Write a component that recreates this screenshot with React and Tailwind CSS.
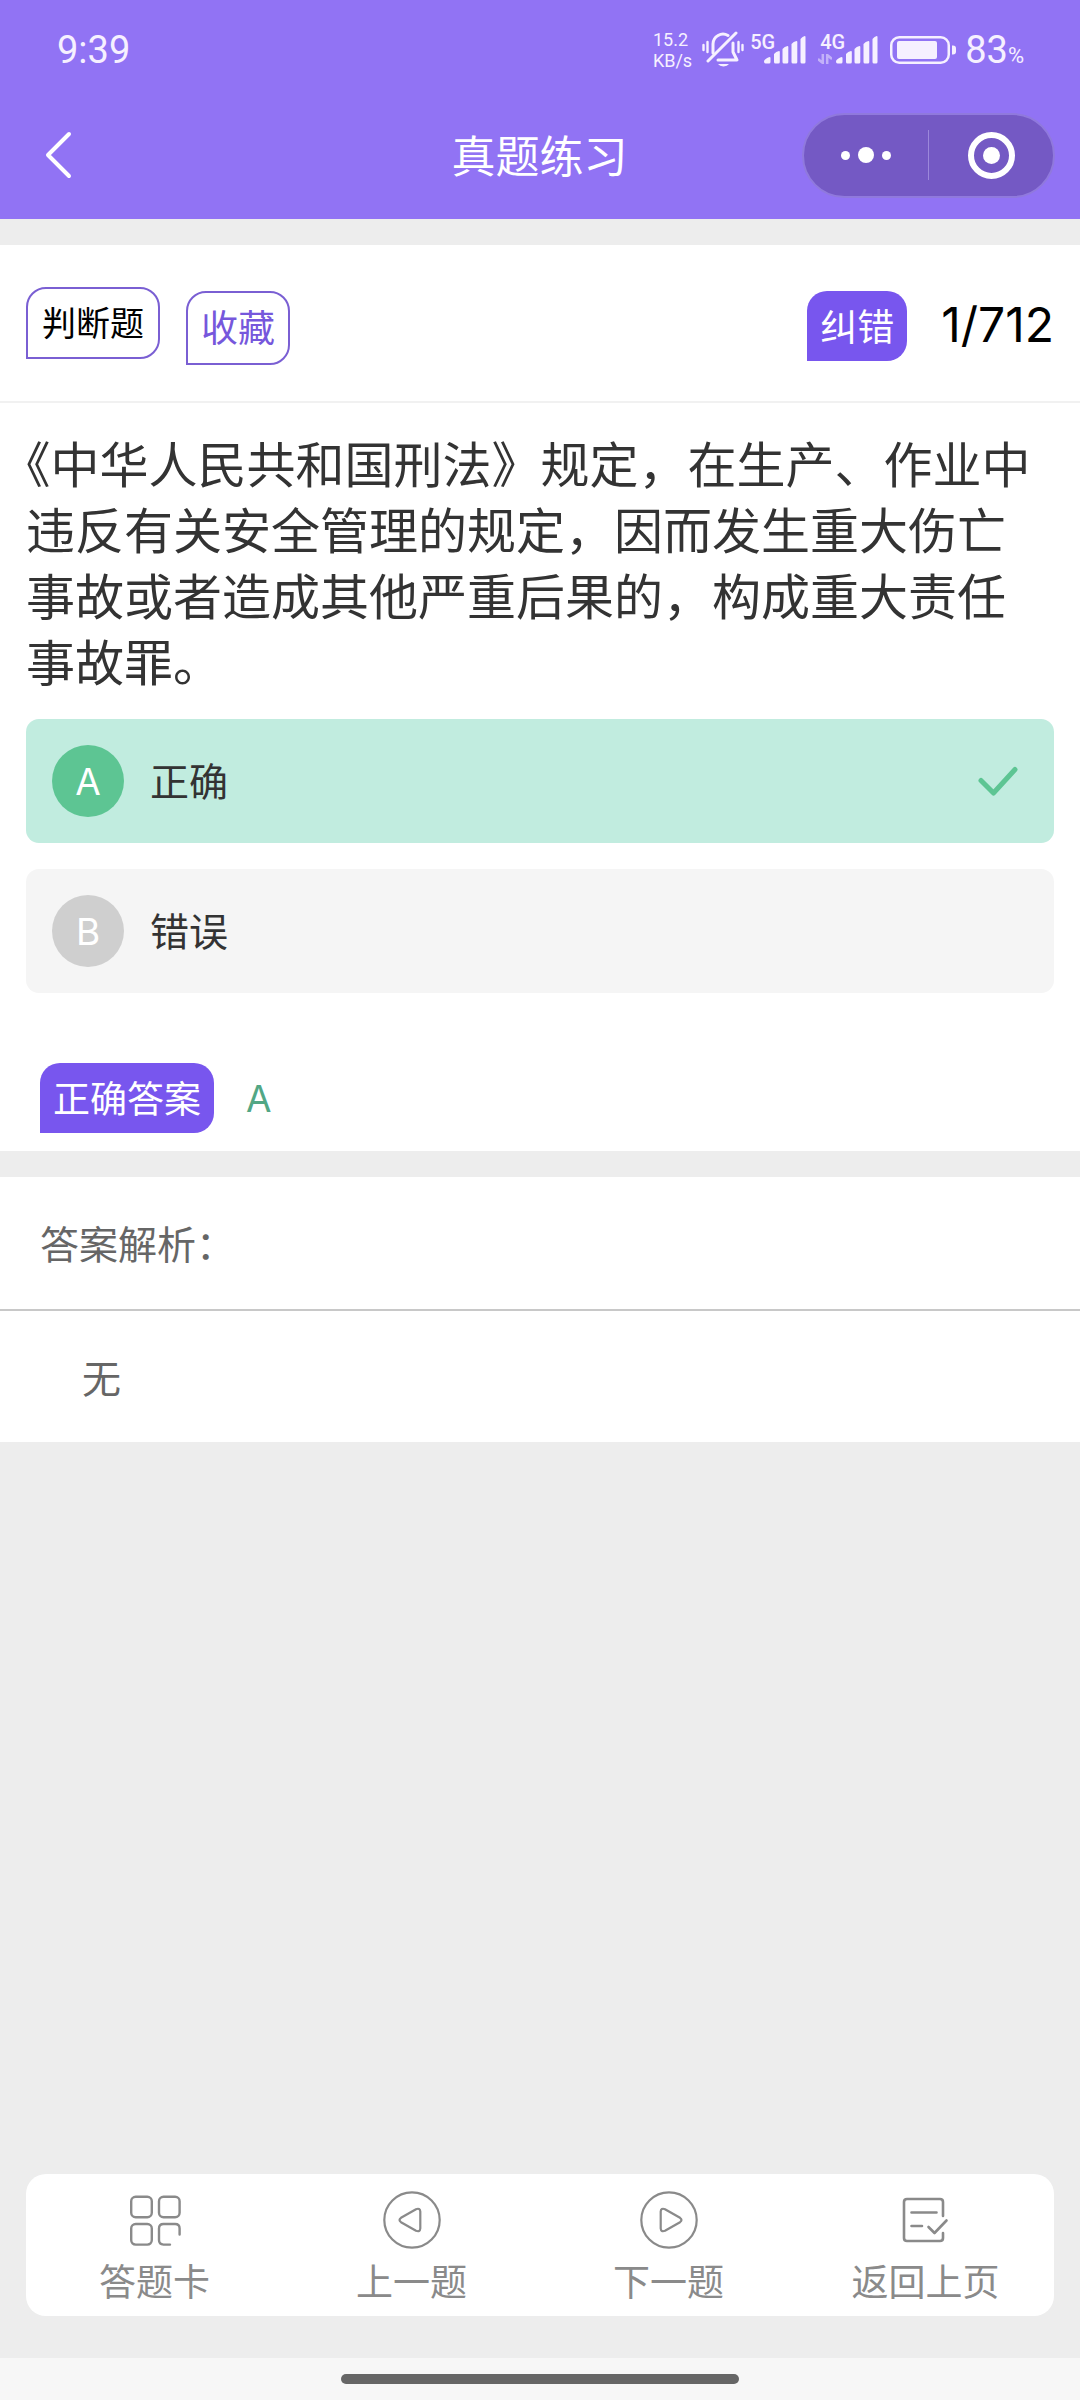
import { useState } from "react";
import clsx from "clsx";

const options = [
  { key: "A", label: "正确" },
  { key: "B", label: "错误" },
];

const correctAnswer = "A";

const BellOffIcon = () => (
  <svg width="42" height="38" viewBox="0 0 42 38" fill="none" stroke="currentColor" strokeLinecap="round" aria-hidden="true">
    <path d="M11 22V13a10 10 0 0 1 15-8.500" strokeWidth="3" />
    <path d="M31 12v9l4 8H16" strokeWidth="3" strokeLinejoin="round" />
    <path d="M6 30 34 2" strokeWidth="3" />
    <path d="M16 33h11a6 4 0 0 1-11 0z" fill="currentColor" stroke="none" />
    <path d="M1.500 14v5M5.500 11v10M36.500 11v10M40.500 14v5" strokeWidth="2.400" />
  </svg>
);

const SignalBars = () => (
  <svg width="42" height="28" viewBox="0 0 42 28" fill="currentColor" aria-hidden="true">
    <path d="M0 25.500Q0 23 5.500 21q1 0 1 1v4q0 1.500-1.500 1.500H1.500Q0 27.500 0 25.500z" />
    <path d="M10 18q2-2.500 5-3 .8 0 .8 1v10q0 1.500-1.500 1.500h-2.800q-1.500 0-1.500-1.500z" />
    <path d="M18.500 13q2-2.500 5-3 .8 0 .8 1v15q0 1.500-1.500 1.500H20q-1.500 0-1.500-1.500z" />
    <path d="M27.500 8q2-2.500 5-3 .8 0 .8 1v20q0 1.500-1.500 1.500H29q-1.500 0-1.500-1.500z" />
    <path d="M36.500 3q2-2.500 4.200-3 .8 0 .8 1v25q0 1.500-1.500 1.500h-2q-1.500 0-1.500-1.500z" />
  </svg>
);

const DataArrows = () => (
  <svg width="14" height="10" viewBox="0 0 14 10" fill="none" stroke="currentColor" strokeWidth="2.500" aria-hidden="true">
    <path d="M4.800 0v9L0 5M9.200 10V1L14 5" />
  </svg>
);

const BatteryIcon = () => (
  <svg width="67" height="28" viewBox="0 0 67 28" fill="none" aria-hidden="true">
    <rect x="1.250" y="1.250" width="57.500" height="25.500" rx="8" stroke="currentColor" strokeWidth="2.500" />
    <rect x="7" y="5" width="40" height="18" rx="2" fill="currentColor" />
    <path d="M62 9.500h1q3 0 3 3v3q0 3-3 3h-1z" fill="currentColor" />
  </svg>
);

const CardIcon = () => (
  <svg width="58" height="58" viewBox="0 0 58 58" fill="none" stroke="currentColor" strokeWidth="2.400" strokeLinecap="round" aria-hidden="true">
    <rect x="5.200" y="5.700" width="20.600" height="20.600" rx="4.500" />
    <rect x="33" y="5.700" width="20.600" height="20.600" rx="4.500" />
    <rect x="5.200" y="33" width="20.600" height="20.600" rx="4.500" />
    <path d="M53.600 43.500v-6q0-4.500-4.500-4.500H37.500Q33 33 33 37.500v11.600q0 4.500 4.500 4.500h6.500" />
  </svg>
);

const PrevIcon = () => (
  <svg width="58" height="58" viewBox="0 0 58 58" fill="none" stroke="currentColor" strokeWidth="2.200" strokeLinejoin="round" aria-hidden="true">
    <circle cx="29" cy="29" r="27.700" />
    <path d="M18 26.800 33 18.200q4-1.500 4.300 2.300v17q-.3 3.800-4.300 2.300L18 31.200q-3-2.200 0-4.400z" />
  </svg>
);

const NextIcon = () => (
  <svg width="58" height="58" viewBox="0 0 58 58" fill="none" stroke="currentColor" strokeWidth="2.200" strokeLinejoin="round" aria-hidden="true">
    <circle cx="29" cy="29" r="27.700" />
    <path d="M40 26.800 25 18.200q-4-1.500-4.300 2.300v17q.3 3.800 4.300 2.300l15-8.600q3-2.200 0-4.400z" />
  </svg>
);

const BackPageIcon = () => (
  <svg width="58" height="58" viewBox="0 0 58 58" fill="none" stroke="currentColor" strokeWidth="2.600" strokeLinecap="round" strokeLinejoin="round" aria-hidden="true">
    <path d="M46 25V11q0-3-3-3H10q-3 0-3 3v36q0 3 3 3h33q3 0 3-3v-5" />
    <path d="M14.500 21.500h25M14.500 35h10.500M31.500 36l6 6L49.500 29.500" />
  </svg>
);

const navItems = [
  { label: "答题卡", Icon: CardIcon },
  { label: "上一题", Icon: PrevIcon },
  { label: "下一题", Icon: NextIcon },
  { label: "返回上页", Icon: BackPageIcon },
];

function StatusBar() {
  return (
    <div className="flex h-[100px] items-center justify-between pr-14 pl-[57px] font-[Roboto,sans-serif] text-[#f6f0ff]">
      <span className="text-[38px]">9:39</span>
      <div className="flex items-center">
        <div className="mr-2.5 flex flex-col text-[18px] leading-[21px]">
          <span>15.2</span>
          <span>KB/s</span>
        </div>
        <BellOffIcon />
        <div className="relative ml-5">
          <SignalBars />
          <span className="absolute -top-1 -left-3.5 text-[20px] leading-5 font-medium">5G</span>
        </div>
        <div className="relative ml-3 flex items-end gap-1">
          <span className="opacity-50">
            <DataArrows />
          </span>
          <SignalBars />
          <span className="absolute -top-1 left-0.5 text-[20px] leading-5 font-medium">4G</span>
        </div>
        <div className="mx-2 ml-3">
          <BatteryIcon />
        </div>
        <div className="flex items-baseline">
          <span className="text-[38px]">83</span>
          <span className="text-[22px]">%</span>
        </div>
      </div>
    </div>
  );
}

function TitleBar() {
  return (
    <div className="grid h-[110px] grid-cols-3 items-center pr-[25px] pl-11 text-white">
      <button type="button" aria-label="返回" className="w-fit">
        <svg width="28" height="48" viewBox="0 0 28 48" fill="none" stroke="currentColor" strokeWidth="4" strokeLinecap="round" strokeLinejoin="round" aria-hidden="true">
          <path d="M25 3 4 24l21 21" />
        </svg>
      </button>
      <h1 className="-ml-5 pt-1 text-center text-[44px] leading-[60px]">真题练习</h1>
      <div className="flex h-[85px] w-[253px] items-center justify-self-end rounded-full border-2 border-[#9079dd] bg-[#7459c4]">
        <button type="button" aria-label="更多" className="flex flex-1 items-center justify-center gap-2">
          <span className="size-[9px] rounded-full bg-white" />
          <span className="size-4 rounded-full bg-white" />
          <span className="size-[9px] rounded-full bg-white" />
        </button>
        <span className="h-[50px] w-px bg-[#9c88db]" />
        <button type="button" aria-label="关闭" className="flex flex-1 items-center justify-center">
          <span className="flex size-[47px] items-center justify-center rounded-full border-6 border-white">
            <span className="size-[17px] rounded-full bg-white" />
          </span>
        </button>
      </div>
    </div>
  );
}

export default function App() {
  const [selected, setSelected] = useState("A");

  return (
    <div
      lang="zh-CN"
      className="flex min-h-screen flex-col bg-[#ededed] font-[Inter,'Noto_Sans_CJK_SC',sans-serif] text-[#333]"
    >
      <header className="bg-[#9173f4] pb-[9px]">
        <StatusBar />
        <TitleBar />
      </header>

      <main className="flex-1">
        <section className="mt-[26px] bg-white">
          <div className="flex h-[158px] items-start border-b-2 border-[#f1f1f1] px-[26px] pt-[42px]">
            <span className="rounded-[20px] rounded-bl-none border-2 border-[#7a5fd3] px-3.5 pt-0.5 text-[34px] leading-[66px] text-black">
              判断题
            </span>
            <button
              type="button"
              className="mt-1 ml-[26px] rounded-[20px] rounded-bl-none border-2 border-[#7a5fd3] px-[13px] pt-0.5 text-[37px] leading-[68px] text-[#7657dc]"
            >
              收藏
            </button>
            <button
              type="button"
              className="mt-1 ml-auto rounded-[20px] rounded-bl-none bg-[#7856ee] px-[13px] pt-1 text-[37px] leading-[66px] text-white"
            >
              纠错
            </button>
            <span className="ml-[34px] pt-0.5 text-[48px] leading-[72px] text-black">1/712</span>
          </div>

          <p className="px-[26px] pt-[30px] pb-[22px] text-[49px] leading-[66px] [text-spacing-trim:trim-start]">
            《中华人民共和国刑法》规定，在生产、作业中违反有关安全管理的规定，因而发生重大伤亡事故或者造成其他严重后果的，构成重大责任事故罪。
          </p>

          <div className="flex flex-col gap-[26px] px-[26px]">
            {options.map(({ key, label }) => (
              <button
                key={key}
                type="button"
                onClick={() => setSelected(key)}
                className={clsx(
                  "flex h-[124px] items-center rounded-[13px] px-[26px]",
                  selected === key ? "bg-[#c1ecdf]" : "bg-[#f5f5f5]"
                )}
              >
                <span
                  className={clsx(
                    "flex size-[72px] items-center justify-center rounded-full pt-0.5 text-[37px] text-white",
                    selected === key ? "bg-[#5dc593]" : "bg-[#cfcfcf]"
                  )}
                >
                  {key}
                </span>
                <span className="ml-[26px] pt-0.5 text-[39px] leading-[60px]">{label}</span>
                {selected === key && (
                  <svg className="mr-2.5 ml-auto" width="40" height="30" viewBox="0 0 40 30" fill="none" stroke="#5dc593" strokeWidth="5" strokeLinecap="round" strokeLinejoin="round" aria-hidden="true">
                    <path d="M3 14.500 15.500 27 37 3.500" />
                  </svg>
                )}
              </button>
            ))}
          </div>

          <div className="flex items-center px-10 pt-[70px] pb-[18px]">
            <span className="rounded-[20px] rounded-bl-none bg-[#7856ee] px-[13px] pt-1 text-[37px] leading-[66px] text-white">
              正确答案
            </span>
            <span className="ml-8 pt-0.5 text-[37px] leading-[68px] text-[#52a785]">{correctAnswer}</span>
          </div>
        </section>

        <section className="mt-[26px] bg-white text-[39px] leading-[60px] text-[#666]">
          <h2 className="border-b-2 border-[#c8c8c8] px-10 pt-[38px] pb-[34px]">答案解析：</h2>
          <p className="px-[82px] pt-[38px] pb-[33px]">无</p>
        </section>
      </main>

      <nav className="mx-[26px] mb-[42px] grid grid-cols-4 rounded-[20px] bg-white pt-[17px] pb-2">
        {navItems.map(({ label, Icon }) => (
          <button key={label} type="button" className="flex flex-col items-center gap-2 text-[#8a8a8a]">
            <Icon />
            <span className="text-[37px] leading-[51px]">{label}</span>
          </button>
        ))}
      </nav>

      <div className="flex h-[42px] items-center justify-center bg-[#f7f7f7]">
        <div className="h-2.5 w-[398px] rounded-full bg-[#666]" />
      </div>
    </div>
  );
}
